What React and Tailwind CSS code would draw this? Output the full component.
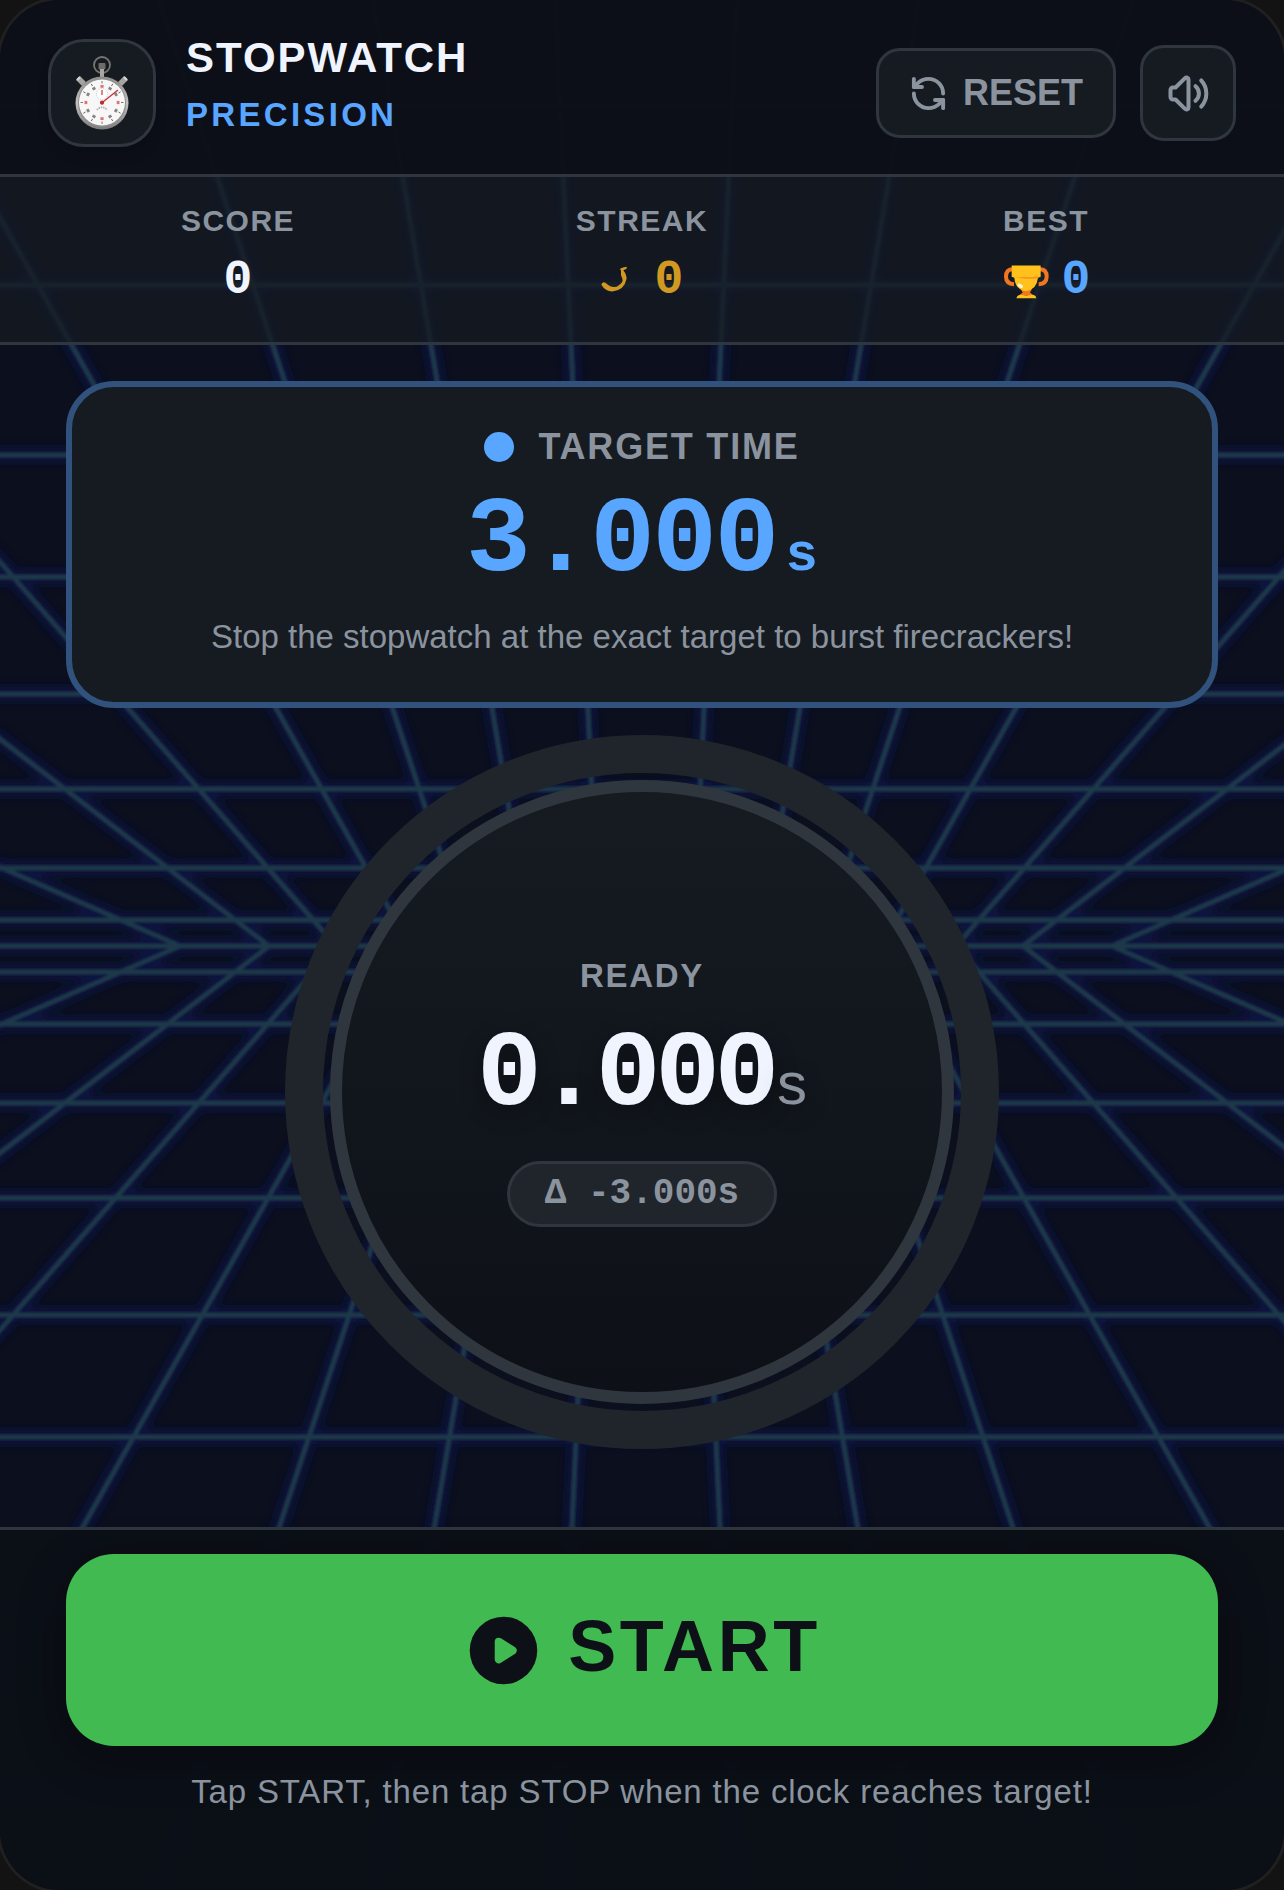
import { RefreshCcw } from "lucide-react";

const HORIZON = 946;
const CENTER = 646;

// distance of every row from the horizon
const ROWS = [26, 78, 157, 252, 369, 491, 661, 840];

// distance from the centre on the horizon, and how far the line drifts per pixel
const RAYS = [
    [466, 2.28],
    [377, 1.3],
    [310, 0.875],
    [236, 0.563],
    [175, 0.33],
    [114, 0.168],
    [47, 0.0465],
];

function gridPath() {
    let d = `M-40 ${HORIZON}H1324`;
    ROWS.forEach((r) => {
        d += `M-40 ${HORIZON - r}H1324M-40 ${HORIZON + r}H1324`;
    });
    RAYS.forEach(([x, slope]) => {
        const far = x + slope * HORIZON;
        [-1, 1].forEach((side) => {
            d += `M${CENTER + side * far} 0L${CENTER + side * x} ${HORIZON}L${CENTER + side * far} ${HORIZON * 2}`;
        });
    });
    return d;
}

function GridBackground() {
    const d = gridPath();
    return (
        <svg
            className="absolute inset-0 w-full h-full"
            viewBox="0 0 1284 1890"
            preserveAspectRatio="xMidYMid slice"
            fill="none"
            aria-hidden="true"
        >
            <defs>
                <filter id="glow" x="-40" y="0" width="1364" height="1890" filterUnits="userSpaceOnUse">
                    <feGaussianBlur stdDeviation="5" />
                </filter>
                <filter id="soft" x="-40" y="0" width="1364" height="1890" filterUnits="userSpaceOnUse">
                    <feGaussianBlur stdDeviation="1" />
                </filter>
            </defs>
            <path d={d} stroke="#071548" strokeWidth="14" filter="url(#glow)" opacity="0.8" />
            <path d={d} stroke="#1f3749" strokeWidth="5" filter="url(#soft)" />
        </svg>
    );
}

function StopwatchIcon() {
    const ticks = Array.from({ length: 12 }, (_, i) => i * 30);
    return (
        <svg width="60" height="78" viewBox="0 0 60 78" aria-hidden="true">
            <defs>
                <linearGradient id="rim" x1="0" y1="0" x2="0" y2="1">
                    <stop offset="0" stopColor="#8b8b8b" />
                    <stop offset="0.5" stopColor="#c4c2c0" />
                    <stop offset="1" stopColor="#7d7b79" />
                </linearGradient>
            </defs>
            <circle cx="30" cy="11" r="8" fill="none" stroke="#77756f" strokeWidth="1.8" />
            <rect x="26.5" y="9" width="7" height="6.5" rx="1" fill="#6e6c68" />
            <rect x="28" y="15" width="4" height="8" fill="#a9a7a3" />
            <path d="M6 24l6 6M54 24l-6 6" stroke="#a5a3a0" strokeWidth="5.5" />
            <path d="M5 26l3-3M55 26l-3-3" stroke="#dad8d5" strokeWidth="2" />
            <circle cx="30" cy="49" r="26.5" fill="url(#rim)" />
            <circle cx="30" cy="49" r="24" fill="#8f8d8b" />
            <circle cx="30" cy="48.5" r="23" fill="#f8f7f7" />
            {ticks.map((a) => (
                <g key={a} transform={`rotate(${a} 30 48.5)`}>
                    <path d="M30 27v2.5" stroke="#555" strokeWidth="0.8" />
                    <rect
                        x="28.4"
                        y="31"
                        width="3.2"
                        height="2.8"
                        fill={a % 90 === 0 ? "#e0504e" : "#666"}
                        opacity="0.8"
                    />
                </g>
            ))}
            <circle cx="30" cy="40" r="5.5" fill="#fff" stroke="#aaa" strokeWidth="0.7" strokeDasharray="1 1.4" />
            <path d="M30 36v5" stroke="#c33" strokeWidth="1.2" />
            <path d="M25 56a6 6 0 0 1 10 0" fill="none" stroke="#b5b0b0" strokeWidth="1.8" strokeDasharray="1.5 0.8" />
            <path d="M29 49.5L46 36" stroke="#d22f2f" strokeWidth="1.3" />
            <circle cx="30" cy="48.7" r="2.1" fill="#c22a2a" />
        </svg>
    );
}

function VolumeIcon() {
    return (
        <svg
            width="45"
            height="45"
            viewBox="0 0 45 45"
            fill="none"
            stroke="currentColor"
            strokeWidth="4"
            strokeLinecap="round"
            strokeLinejoin="round"
            aria-hidden="true"
        >
            <path d="M9.5 16.5H7a2.5 2.5 0 0 0-2.5 2.5v7A2.5 2.5 0 0 0 7 28.5h2.5l9.3 9.2c1.5 1.500 3.700 0.800 3.700-1.300V8.600c0-2.100-2.200-2.800-3.700-1.300z" />
            <path d="M29.500 15.200a9.500 9.500 0 0 1 0 14.600" />
            <path d="M35.200 9.400a19.300 19.300 0 0 1 0 26.200" />
        </svg>
    );
}

function StreakIcon() {
    return (
        <svg width="42" height="37" viewBox="180 240 126 110" fill="currentColor" aria-hidden="true">
            <path d="M181 308Q184 297 193 302Q216 323 234 309Q248 300 244 290Q238 278 240 266L237 260L246 256L257 254L257 260L247 264Q259 280 256 292Q250 324 214 328Q192 327 181 308Z" />
        </svg>
    );
}

function TrophyIcon() {
    return (
        <svg width="48" height="37" viewBox="485 787 144 110" aria-hidden="true">
            <path
                d="M518 808q-21 0-21 22t24 23M598 808q21 0 21 22t-24 23"
                fill="none"
                stroke="#f27521"
                strokeWidth="12"
            />
            <path d="M541 868h34l-6 10 12 10h-46l12-10z" fill="#f27521" />
            <path d="M514 797h87v34l-8 3q-4 36-36 40-32-4-35-40l-8-3z" fill="#ffc11b" />
            <path d="M524 831q40 2 70-2v6q-30 4-50 0z" fill="#f5952a" />
            <path d="M528 895q4-10 14-10 16 5 32 0 12 0 14 10z" fill="#ffc11b" />
            <ellipse cx="540" cy="858" rx="9" ry="5.5" fill="#fff4d0" transform="rotate(25 540 858)" />
        </svg>
    );
}

function PlayIcon() {
    return (
        <svg width="81" height="81" viewBox="0 0 24 24" aria-hidden="true">
            <circle cx="12" cy="12" r="10" fill="#0d1117" />
            <path
                d="M10.600 9.400L14.700 12L10.600 14.600Z"
                fill="#41ba51"
                stroke="#41ba51"
                strokeWidth="2.400"
                strokeLinejoin="round"
            />
        </svg>
    );
}

function Stat({ label, value, icon, color }) {
    return (
        <div className="flex flex-col items-center gap-[11px]">
            <span className="text-[30px] leading-[36px] font-bold tracking-wider text-[#8b949e]">{label}</span>
            <span
                className={`flex items-center gap-3 font-['Liberation_Mono',monospace] text-5xl leading-[60px] font-bold ${color}`}
            >
                {icon}
                {value}
            </span>
        </div>
    );
}

export default function App() {
    return (
        <div className="min-h-screen bg-[#131313] font-['Liberation_Sans',Arial,sans-serif]">
            <div className="relative min-h-screen flex flex-col overflow-hidden rounded-[60px] bg-[#0c0f1d] shadow-[0_0_0_3px_#202020]">
                <GridBackground />

                <header className="relative flex items-center justify-between px-12 pt-3 h-[177px] border-b-3 border-[#30363d] bg-[#0c0f17]/98">
                    <div className="flex items-center gap-[30px]">
                        <div className="flex items-center justify-center size-27 rounded-[36px] border-3 border-[#30363d] bg-[#161b22] shadow-lg">
                            <StopwatchIcon />
                        </div>
                        <div>
                            <h1 className="text-[42px] leading-[44px] font-bold tracking-[2px] text-[#f0f4ff]">STOPWATCH</h1>
                            <p className="text-[33px] leading-[70px] font-bold tracking-widest text-[#58a6ff]">PRECISION</p>
                        </div>
                    </div>
                    <div className="flex items-center gap-6 text-[#8b949e]">
                        <button className="flex items-center gap-[15px] h-[90px] px-[30px] rounded-3xl border-3 border-[#30363d] bg-[#161b22] text-4xl font-bold">
                            <RefreshCcw size={39} strokeWidth={2.4} />
                            RESET
                        </button>
                        <button
                            aria-label="Sound"
                            className="flex items-center justify-center size-24 rounded-3xl border-3 border-[#30363d] bg-[#161b22]"
                        >
                            <VolumeIcon />
                        </button>
                    </div>
                </header>

                <section className="relative grid grid-cols-3 px-9 pt-[26px] pb-8 border-b-3 border-[#30363d] bg-[#161b22]/75">
                    <Stat label="SCORE" value="0" color="text-[#f0f4ff]" />
                    <Stat label="STREAK" value="0" color="text-[#d29922]" icon={<StreakIcon />} />
                    <Stat label="BEST" value="0" color="text-[#58a6ff]" icon={<TrophyIcon />} />
                </section>

                <main className="relative flex-1 flex flex-col items-center px-[66px] pt-9">
                    <section className="w-full flex flex-col items-center rounded-[48px] border-6 border-[#30527c] bg-[#161b22] pt-[33px] pb-[41px]">
                        <h2 className="flex items-center gap-6 text-4xl leading-[54px] font-bold tracking-wider text-[#8b949e]">
                            <span className="size-[30px] rounded-full bg-[#58a6ff]" />
                            TARGET TIME
                        </h2>
                        <div className="flex items-baseline gap-[9px] mt-[13px] font-['Liberation_Mono',monospace] text-[108px] leading-[108px] font-bold text-[#58a6ff]">
                            <span className="tracking-tight">3.000</span>
                            <span className="text-[54px] leading-[54px]">s</span>
                        </div>
                        <p className="mt-[18px] text-[33px] leading-[48px] text-[#8b949e]">
                            Stop the stopwatch at the exact target to burst firecrackers!
                        </p>
                    </section>

                    <div className="mt-[27px] size-[714px] rounded-full border-[38px] border-[#20252b] p-[7px]">
                        <div className="size-full flex flex-col items-center justify-center rounded-full border-12 border-[#30363d] bg-linear-to-b from-[#161b22] to-[#0d1117] pb-[6px]">
                            <span className="text-[33px] leading-[48px] font-bold tracking-wider text-[#8b949e]">READY</span>
                            <div className="flex items-baseline gap-[3px] mt-[21px] text-shadow-[0_6px_24px_rgb(0_0_0/0.3)]">
                                <span className="font-['Liberation_Mono',monospace] text-[108px] leading-[108px] font-bold tracking-tighter text-[#f0f4ff]">
                                    0.000
                                </span>
                                <span className="text-[60px] leading-[60px] text-[#8b949e]">s</span>
                            </div>
                            <span className="flex items-center mt-8 h-[66px] px-[35px] rounded-full border-3 border-[#30363d] bg-[#20252c] font-['Liberation_Mono',monospace] text-4xl font-bold text-[#8b949e]">
                                Δ -3.000s
                            </span>
                        </div>
                    </div>
                </main>

                <footer className="relative flex flex-col items-center px-[66px] pt-6 pb-[74px] border-t-3 border-[#30363d] bg-[#0b0f16]/98">
                    <button className="w-full h-[192px] flex items-center justify-center gap-6 rounded-[48px] bg-[#41ba51] text-7xl font-bold tracking-wider text-[#0d1117] shadow-[0_12px_48px_rgb(0_0_0/0.3)]">
                        <PlayIcon />
                        <span className="pb-2">START</span>
                    </button>
                    <p className="mt-[22px] text-[33px] leading-[48px] tracking-wide text-[#8b949e]">
                        Tap START, then tap STOP when the clock reaches target!
                    </p>
                </footer>
            </div>
        </div>
    );
}
